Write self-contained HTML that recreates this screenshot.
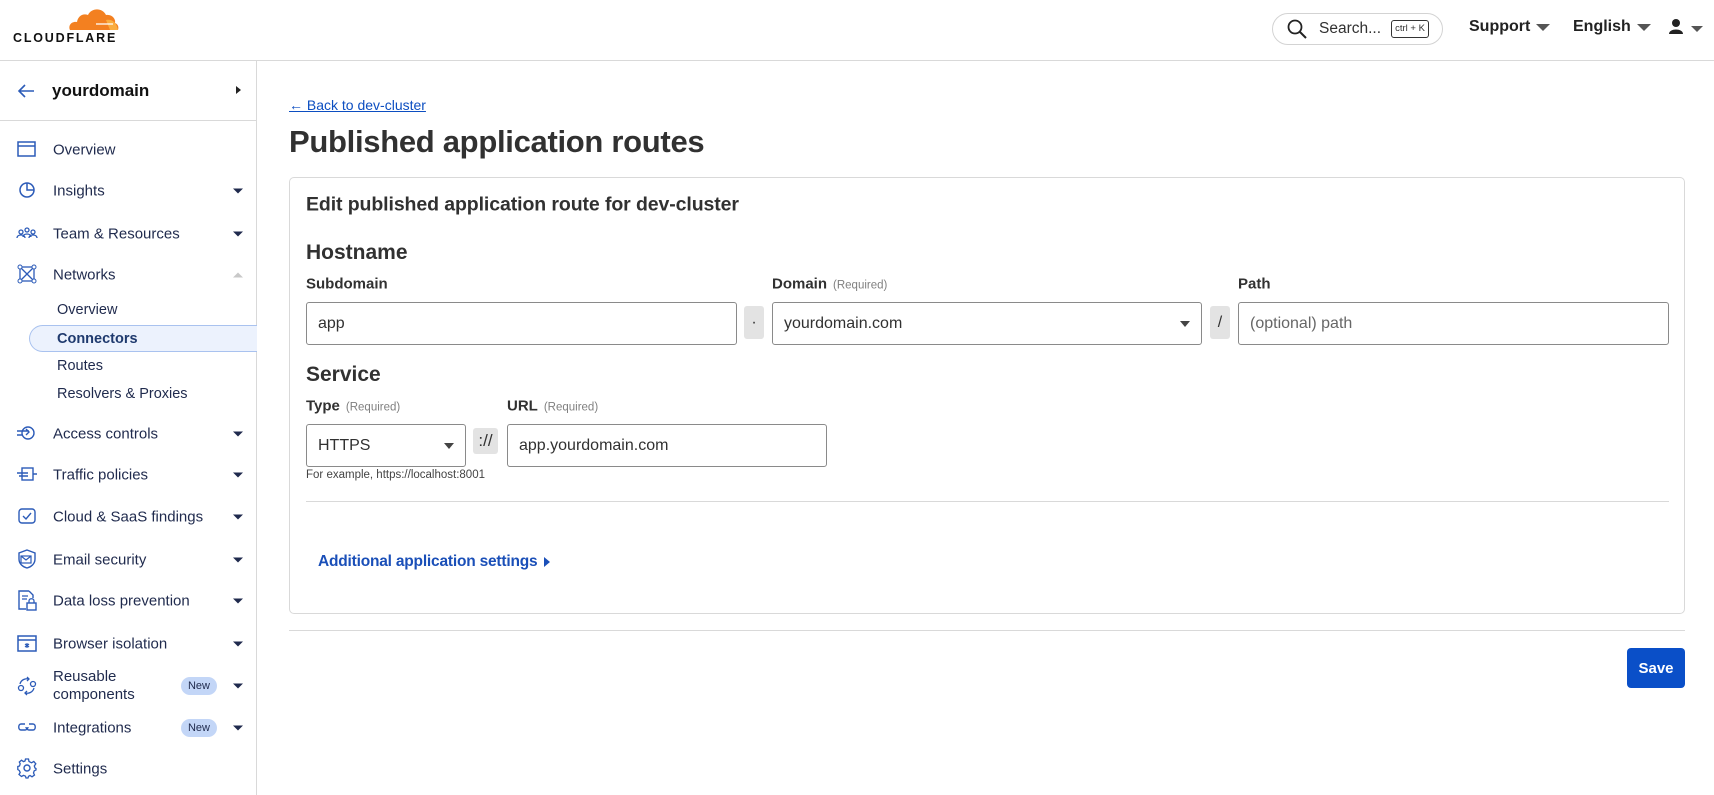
<!DOCTYPE html>
<html><head><meta charset="utf-8"><style>
*{box-sizing:border-box;margin:0;padding:0}
body{width:1714px;height:795px;overflow:hidden;background:#fff;font-family:"Liberation Sans",sans-serif;color:#313131;position:relative}
.abs{position:absolute}
.hdr{left:0;top:0;width:1714px;height:61px;border-bottom:1px solid #d9d9d9}
.side{left:0;top:61px;width:257px;height:734px;border-right:1px solid #d9d9d9}
.nav{position:absolute;left:53px;font-size:15px;color:#1f2a4d;transform:translateY(-50%);white-space:nowrap}
.ico{position:absolute;left:16px;width:22px;height:22px;transform:translateY(-50%)}
.car{position:absolute;left:233px;width:0;height:0;border-left:5px solid transparent;border-right:5px solid transparent;border-top:5px solid #1f2a4d;transform:translateY(-50%)}
.sub{position:absolute;left:57px;font-size:14.5px;color:#1f2a4d;transform:translateY(-50%)}
.new{position:absolute;left:181px;width:36px;height:18px;border-radius:9px;background:#c3d6f7;font-size:11px;color:#1f2a4d;text-align:center;line-height:18px;transform:translateY(-50%)}
.lbl{position:absolute;font-size:15px;font-weight:bold;color:#313131;transform:translateY(-50%)}
.lbl span{font-weight:normal;font-size:11.5px;color:#808080;margin-left:6px}
.inp{position:absolute;border:1px solid #8a8a8a;border-radius:3px;font-size:16px;color:#313131;padding-left:11px;display:flex;align-items:center}
.add{position:absolute;background:#e3e3e3;border-radius:3px;font-size:16px;display:flex;align-items:center;justify-content:center;color:#313131}
.dd{position:absolute;right:11px;top:50%;border-left:5px solid transparent;border-right:5px solid transparent;border-top:6px solid #444;transform:translateY(-50%)}
.h{position:absolute;font-weight:bold;color:#313131;transform:translateY(-50%);white-space:nowrap}
.hm{position:absolute;top:18px;font-size:16px;font-weight:bold;color:#222;display:flex;align-items:center;gap:6px}
.hm i{display:inline-block;border-left:7px solid transparent;border-right:7px solid transparent;border-top:7px solid #555}
</style></head><body>
<div class="abs hdr">
<svg class="abs" style="left:66px;top:6px" width="54" height="26" viewBox="0 0 54 26"><path d="M4 24 C2 20 5 15 11 16 C12 10 17 7 22 9 C25 2 36 1 40 9 C46 8 50 13 49 17 C52 18 53 21 52 24 Z" fill="#f38020"/><path d="M40 14 C45 13 50 15 52 24 L44 24 Z" fill="#faad3f"/><path d="M30 18 L47 18" stroke="#fff" stroke-width="1.3"/></svg>
<div class="abs" style="left:13px;top:31px;font-size:12.5px;font-weight:bold;letter-spacing:1.8px;color:#111">CLOUDFLARE</div>
<div class="abs" style="left:1272px;top:13px;width:171px;height:32px;border:1px solid #d3d3d3;border-radius:16px"></div>
<svg class="abs" style="left:1286px;top:18px" width="22" height="22" viewBox="0 0 22 22"><circle cx="9" cy="9" r="6.5" fill="none" stroke="#222" stroke-width="1.8"/><path d="M14 14 L20 20" stroke="#222" stroke-width="2"/></svg>
<div class="abs" style="left:1319px;top:20px;font-size:15.5px;color:#313131">Search...</div>
<div class="abs" style="left:1391px;top:20px;width:38px;height:18px;border:1px solid #333;border-radius:3px;font-size:9.5px;text-align:center;line-height:16px">ctrl + K</div>
<div class="hm" style="left:1469px">Support<i></i></div>
<div class="hm" style="left:1573px">English<i></i></div>
<svg class="abs" style="left:1668px;top:18px" width="16" height="18" viewBox="0 0 16 18"><circle cx="8" cy="5" r="4" fill="#222"/><path d="M1 16 C1 10 15 10 15 16 Z" fill="#222"/></svg>
<div class="abs" style="left:1691px;top:26px;border-left:6px solid transparent;border-right:6px solid transparent;border-top:6px solid #555"></div>
</div>
<div class="abs side"></div>
<div class="abs" style="left:0;top:120px;width:256px;height:1px;background:#d9d9d9"></div>
<svg class="abs" style="left:16px;top:82px" width="20" height="18" viewBox="0 0 20 18"><path d="M18 9 H3 M9 3 L3 9 L9 15" fill="none" stroke="#2c5bb8" stroke-width="1.6"/></svg>
<div class="abs" style="left:52px;top:81px;font-size:17px;font-weight:bold;color:#111">yourdomain</div>
<div class="abs" style="left:236px;top:86px;border-top:4px solid transparent;border-bottom:4px solid transparent;border-left:5px solid #222"></div>
<div class="abs" style="left:29px;top:325px;width:228px;height:27px;border:1px solid #a9c2ef;border-right:none;border-radius:14px 0 0 14px;background:#ecf2fd"></div>

<svg class="ico" style="top:149px" viewBox="0 0 22 22"><rect x="2" y="4" width="17" height="14" fill="none" stroke="#2c5bb8" stroke-width="1.5"/><path d="M2 8 H19" stroke="#2c5bb8" stroke-width="1.5"/></svg><div class="nav" style="top:150px">Overview</div>
<svg class="ico" style="top:190px" viewBox="0 0 22 22"><circle cx="11" cy="11" r="7" fill="none" stroke="#2c5bb8" stroke-width="1.5"/><path d="M11 4 V11 H18" fill="none" stroke="#2c5bb8" stroke-width="1.5"/></svg><div class="nav" style="top:191px">Insights</div><div class="car" style="top:191px"></div>
<svg class="ico" style="top:233px" viewBox="0 0 22 22"><circle cx="5" cy="10" r="2" fill="none" stroke="#2c5bb8" stroke-width="1.3"/><circle cx="11" cy="8" r="2" fill="none" stroke="#2c5bb8" stroke-width="1.3"/><circle cx="17" cy="10" r="2" fill="none" stroke="#2c5bb8" stroke-width="1.3"/><path d="M1 16 C1 12 9 12 9 16 M7 15 C7 11 15 11 15 15 M13 16 C13 12 21 12 21 16" fill="none" stroke="#2c5bb8" stroke-width="1.3"/></svg><div class="nav" style="top:234px">Team &amp; Resources</div><div class="car" style="top:234px"></div>
<svg class="ico" style="top:274px" viewBox="0 0 22 22"><rect x="4" y="4" width="14" height="14" fill="none" stroke="#2c5bb8" stroke-width="1.3"/><path d="M4 4 L18 18 M18 4 L4 18" stroke="#2c5bb8" stroke-width="1.3"/><circle cx="4" cy="4" r="2" fill="#fff" stroke="#2c5bb8"/><circle cx="18" cy="4" r="2" fill="#fff" stroke="#2c5bb8"/><circle cx="4" cy="18" r="2" fill="#fff" stroke="#2c5bb8"/><circle cx="18" cy="18" r="2" fill="#fff" stroke="#2c5bb8"/></svg><div class="nav" style="top:275px">Networks</div><div class="car" style="top:275px;border-top:none;border-bottom:5px solid #c8c8c8"></div>
<div class="sub" style="top:310px">Overview</div>
<div class="sub" style="top:339px;font-weight:bold;color:#1f3a6e">Connectors</div>
<div class="sub" style="top:366px">Routes</div>
<div class="sub" style="top:394px">Resolvers &amp; Proxies</div>
<svg class="ico" style="top:433px" viewBox="0 0 22 22"><circle cx="12" cy="11" r="6" fill="none" stroke="#2c5bb8" stroke-width="1.4"/><path d="M1 9 H13 M1 13 H6 M10 7 L13 10 L10 13" fill="none" stroke="#2c5bb8" stroke-width="1.4"/></svg><div class="nav" style="top:434px">Access controls</div><div class="car" style="top:434px"></div>
<svg class="ico" style="top:474px" viewBox="0 0 22 22"><rect x="6" y="5" width="11" height="12" fill="none" stroke="#2c5bb8" stroke-width="1.4"/><path d="M1 10 H12 M3 13 H12 M17 11 H21" stroke="#2c5bb8" stroke-width="1.4"/></svg><div class="nav" style="top:475px">Traffic policies</div><div class="car" style="top:475px"></div>
<svg class="ico" style="top:516px" viewBox="0 0 22 22"><rect x="3" y="4" width="16" height="14" rx="3" fill="none" stroke="#2c5bb8" stroke-width="1.4"/><path d="M7 11 L10 14 L15 8" fill="none" stroke="#2c5bb8" stroke-width="1.4"/></svg><div class="nav" style="top:517px">Cloud &amp; SaaS findings</div><div class="car" style="top:517px"></div>
<svg class="ico" style="top:559px" viewBox="0 0 22 22"><path d="M11 2 L19 5 V11 C19 16 15 19 11 20 C7 19 3 16 3 11 V5 Z" fill="none" stroke="#2c5bb8" stroke-width="1.4"/><rect x="5" y="8" width="10" height="7" fill="none" stroke="#2c5bb8" stroke-width="1.2"/><path d="M5 8 L10 12 L15 8" fill="none" stroke="#2c5bb8" stroke-width="1.2"/></svg><div class="nav" style="top:560px">Email security</div><div class="car" style="top:560px"></div>
<svg class="ico" style="top:600px" viewBox="0 0 22 22"><path d="M13 2 H3 V20 H10 M13 2 L17 6 V9" fill="none" stroke="#2c5bb8" stroke-width="1.4"/><path d="M6 7 H12 M6 10 H11" stroke="#2c5bb8" stroke-width="1.3"/><rect x="11" y="14" width="9" height="7" fill="none" stroke="#2c5bb8" stroke-width="1.4"/><path d="M13 14 V12 C13 9 18 9 18 12 V14" fill="none" stroke="#2c5bb8" stroke-width="1.3"/></svg><div class="nav" style="top:601px">Data loss prevention</div><div class="car" style="top:601px"></div>
<svg class="ico" style="top:643px" viewBox="0 0 22 22"><rect x="2" y="4" width="18" height="15" fill="none" stroke="#2c5bb8" stroke-width="1.5"/><path d="M2 8 H20" stroke="#2c5bb8" stroke-width="1.5"/><path d="M11 11 V16 M9 12 L13 15 M13 12 L9 15" stroke="#2c5bb8" stroke-width="1.2"/></svg><div class="nav" style="top:644px">Browser isolation</div><div class="car" style="top:644px"></div>
<svg class="ico" style="top:686px" viewBox="0 0 22 22"><circle cx="5" cy="13" r="2.5" fill="none" stroke="#2c5bb8" stroke-width="1.3"/><circle cx="17" cy="9" r="2.5" fill="none" stroke="#2c5bb8" stroke-width="1.3"/><path d="M4 9 C5 5 9 3 13 4 M11 2 L13 4 L11 6 M18 13 C17 17 13 19 9 18 M11 16 L9 18 L11 20" fill="none" stroke="#2c5bb8" stroke-width="1.3"/></svg><div class="nav" style="top:686px;line-height:18px">Reusable<br>components</div><div class="new" style="top:686px">New</div><div class="car" style="top:686px"></div>
<svg class="ico" style="top:727px" viewBox="0 0 22 22"><path d="M9 8 H5 C2 8 2 14 5 14 H9 C11 14 12 12 12 11 M13 8 H17 C20 8 20 14 17 14 H13 C11 14 10 12 10 11" fill="none" stroke="#2c5bb8" stroke-width="1.4"/></svg><div class="nav" style="top:728px">Integrations</div><div class="new" style="top:728px">New</div><div class="car" style="top:728px"></div>
<svg class="ico" style="top:768px" viewBox="0 0 22 22"><circle cx="11" cy="11" r="3" fill="none" stroke="#2c5bb8" stroke-width="1.4"/><path d="M9.5 2 H12.5 L13 4.5 L15.5 5.8 L17.8 4.5 L19.8 6.8 L18.3 9 L19 11 L20 11.5 V13 L18.2 13.8 L17.5 16 L18.5 18 L16 19.8 L14 18.5 L12.5 19.3 L12 21 H10 L9.5 19.2 L7.5 18.4 L5.5 19.5 L3 17.5 L4.2 15.5 L3.3 13.5 L1.8 12.5 V9.5 L3.5 9 L4.2 6.8 L3.3 5 L5.5 3.2 L7.5 4.6 L9 4 Z" fill="none" stroke="#2c5bb8" stroke-width="1.3"/></svg><div class="nav" style="top:769px">Settings</div>

<div class="abs" style="left:289px;top:97px;font-size:14px;color:#0c4ec1;text-decoration:underline">← Back to dev-cluster</div>
<div class="h" style="left:289px;top:142px;font-size:31px;letter-spacing:-0.3px">Published application routes</div>
<div class="abs" style="left:289px;top:177px;width:1396px;height:437px;border:1px solid #d9d9d9;border-radius:5px"></div>
<div class="h" style="left:306px;top:205px;font-size:19.5px;letter-spacing:-0.1px">Edit published application route for dev-cluster</div>
<div class="h" style="left:306px;top:253px;font-size:21px">Hostname</div>
<div class="lbl" style="left:306px;top:284px">Subdomain</div>
<div class="lbl" style="left:772px;top:284px">Domain<span>(Required)</span></div>
<div class="lbl" style="left:1238px;top:284px">Path</div>
<div class="inp" style="left:306px;top:302px;width:431px;height:43px">app</div>
<div class="add" style="left:744px;top:306px;width:20px;height:33px">·</div>
<div class="inp" style="left:772px;top:302px;width:430px;height:43px">yourdomain.com<div class="dd"></div></div>
<div class="add" style="left:1210px;top:306px;width:20px;height:33px">/</div>
<div class="inp" style="left:1238px;top:302px;width:431px;height:43px;color:#666">(optional) path</div>
<div class="h" style="left:306px;top:375px;font-size:21px">Service</div>
<div class="lbl" style="left:306px;top:406px">Type<span>(Required)</span></div>
<div class="lbl" style="left:507px;top:406px">URL<span>(Required)</span></div>
<div class="inp" style="left:306px;top:424px;width:160px;height:43px">HTTPS<div class="dd"></div></div>
<div class="add" style="left:473px;top:428px;width:25px;height:26px;font-size:17px">://</div>
<div class="inp" style="left:507px;top:424px;width:320px;height:43px">app.yourdomain.com</div>
<div class="abs" style="left:306px;top:469px;font-size:11.5px;color:#444">For example, https://localhost:8001</div>
<div class="abs" style="left:306px;top:501px;width:1363px;height:1px;background:#d9d9d9"></div>
<div class="abs" style="left:318px;top:553px;font-size:15.5px;font-weight:bold;color:#1a4fb8;letter-spacing:-0.2px;display:flex;align-items:center;gap:7px">Additional application settings<i style="display:inline-block;border-top:5px solid transparent;border-bottom:5px solid transparent;border-left:6px solid #1a4fb8"></i></div>
<div class="abs" style="left:289px;top:630px;width:1396px;height:1px;background:#d9d9d9"></div>
<div class="abs" style="left:1627px;top:648px;width:58px;height:40px;background:#0a4fc8;border-radius:4px;color:#fff;font-size:15px;font-weight:bold;display:flex;align-items:center;justify-content:center">Save</div>
</body></html>
